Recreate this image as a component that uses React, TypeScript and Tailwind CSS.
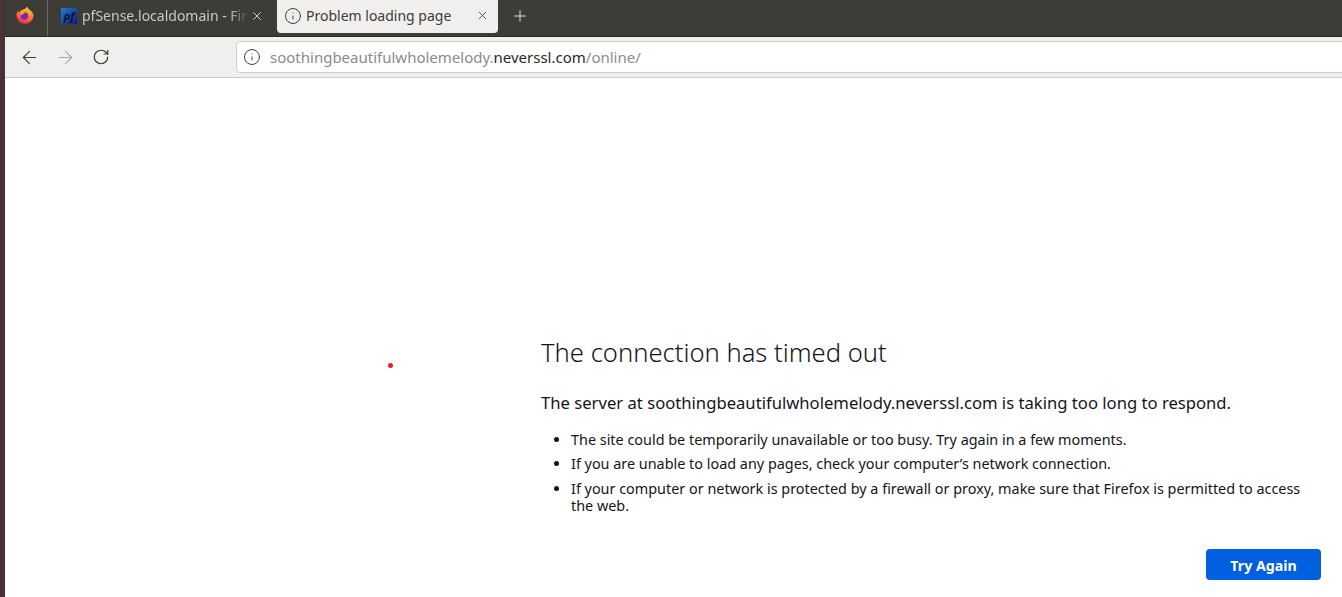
import React from 'react';
import { ArrowLeft, ArrowRight, Info, Plus, RotateCw, X } from 'lucide-react';

const sans = { fontFamily: '"Noto Sans", sans-serif' };

function FirefoxLogo() {
    return (
        <svg width="18" height="18" viewBox="0 0 17 17">
            <defs>
                <linearGradient id="fx" x1="0.7" y1="0" x2="0.3" y2="1">
                    <stop offset="0" stopColor="#ffd53a" />
                    <stop offset="0.5" stopColor="#ff7a2a" />
                    <stop offset="1" stopColor="#f5206a" />
                </linearGradient>
            </defs>
            <path d="M10.5 0.5c.4 1.6 1.4 2.3 2.6 3.3 1.9 1.5 3.4 3 3.4 5.2a8 8 0 1 1-16-.6c.1-1.6.7-3 1.6-4 .1 1 .5 1.6 1 2 .5-1.5 1.6-2.4 3-2.8 1.800-.5 3.600-1.200 4.400-3.100z" fill="url(#fx)" />
            <circle cx="8" cy="9.500" r="3.400" fill="#6a2bb8" />
            <path d="M3.500 5.500c1.500-.8 3-.6 4 .2 1 .8.600 1.600-.6 1.800-.8.100-1.100.6-1 1.300-1.100-.4-2-1.700-2.400-3.300z" fill="#ff9d2e" />
        </svg>
    );
}

function PfSenseIcon() {
    return (
        <div className="w-[16px] h-[16px] bg-gradient-to-br from-[#1f7fd0] to-[#14157e] flex items-center justify-center overflow-hidden">
            <span className="text-[#0c1030] text-[11px] italic font-bold leading-none" style={sans}>pf</span>
        </div>
    );
}

export default function App() {
    return (
        <div className="relative w-[1342px] h-[597px] overflow-hidden bg-white flex" style={sans}>
            <div className="w-[5px] shrink-0 bg-[#4c3238]" />
            <div className="flex-1 min-w-0 flex flex-col">
                <div className="h-[37px] shrink-0 bg-[#3d3c37] border-b border-[#2a2925] flex items-start">
                    <div className="w-[43px] h-[36px] shrink-0 border-r border-[#6a6964] flex items-center justify-center pb-[7px] pr-[2px]">
                        <FirefoxLogo />
                    </div>
                    <div className="w-[229px] h-[31px] shrink-0 flex items-center pl-[13px] text-[#c9c8c4]">
                        <PfSenseIcon />
                        <span className="ml-[5px] w-[167px] whitespace-nowrap text-[14px] [mask-image:linear-gradient(to_right,black_88%,transparent)]">
                            pfSense.localdomain - Fir
                        </span>
                        <X size={14} strokeWidth={1.5} className="ml-[1px] text-[#e6e5e2]" />
                    </div>
                    <div className="w-[221px] h-[33px] shrink-0 bg-[#f0efed] rounded-b-[4px] flex items-center pl-[7px] pr-[9px] pb-[2px] text-[#3d3c37]">
                        <Info size={18} strokeWidth={1.3} />
                        <span className="ml-[4px] text-[14px] whitespace-nowrap">Problem loading page</span>
                        <X size={13} strokeWidth={1.5} className="ml-auto" />
                    </div>
                    <div className="h-[31px] ml-[13px] flex items-center text-[#e6e5e2]">
                        <Plus size={18} strokeWidth={1.3} />
                    </div>
                </div>
                <div className="h-[41px] shrink-0 bg-[#f0efed] border-b border-[#cfccc8] flex items-center pl-[13.5px]">
                    <ArrowLeft size={21} strokeWidth={1.3} className="text-[#3d3c37]" />
                    <ArrowRight size={21} strokeWidth={1.3} className="ml-[15px] text-[#a9a8a5]" />
                    <RotateCw size={18} strokeWidth={1.6} className="ml-[16.5px] text-[#3d3c37]" />
                    <div className="ml-[126px] flex-1 h-[32px] -mr-[8px] bg-white border border-[#cfccc8] rounded-[4px] flex items-center pl-[6px]">
                        <Info size={18} strokeWidth={1.3} className="text-[#3d3c37]" />
                        <div className="ml-[9px] text-[15px] whitespace-nowrap text-[#8c8b88]">
                            soothingbeautifulwholemelody.<span className="text-[#2a2925]">neverssl.com</span>/online/
                        </div>
                    </div>
                </div>
                <div className="flex-1 min-h-0 pl-[536px] pr-[21px] pt-[258px] text-[#15141a] flex flex-col">
                    <h1 className="text-[25.6px] leading-[34px] font-light">The connection has timed out</h1>
                    <p className="mt-[21px] text-[16.65px] leading-[24px]">
                        The server at soothingbeautifulwholemelody.neverssl.com is taking too long to respond.
                    </p>
                    <ul className="mt-[16px] pl-[30px] list-disc text-[14.4px] leading-[17px] space-y-[7px]">
                        <li>The site could be temporarily unavailable or too busy. Try again in a few moments.</li>
                        <li>If you are unable to load any pages, check your computer’s network connection.</li>
                        <li className="!mt-[8px]">If your computer or network is protected by a firewall or proxy, make sure that Firefox is permitted to access the web.</li>
                    </ul>
                    <div className="mt-[35px] flex justify-end">
                        <button className="w-[115px] h-[31px] pt-[2px] bg-[#0060df] rounded-[4px] text-white text-[14.2px] font-bold">Try Again</button>
                    </div>
                </div>
            </div>
            <div className="absolute left-[388px] top-[363px] w-[5px] h-[5px] rounded-full bg-[#e0202a]" />
        </div>
    );
}
